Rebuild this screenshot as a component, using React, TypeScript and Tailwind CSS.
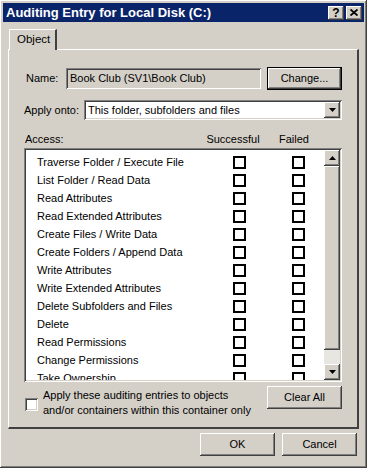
const raised =
  'shadow-[inset_-1px_-1px_#404040,inset_1px_1px_#ffffff,inset_-2px_-2px_#808080,inset_2px_2px_#d4d0c8]'
const sunken =
  'shadow-[inset_1px_1px_#808080,inset_-1px_-1px_#ffffff,inset_2px_2px_#404040,inset_-2px_-2px_#d4d0c8]'

const rights = [
  'Traverse Folder / Execute File',
  'List Folder / Read Data',
  'Read Attributes',
  'Read Extended Attributes',
  'Create Files / Write Data',
  'Create Folders / Append Data',
  'Write Attributes',
  'Write Extended Attributes',
  'Delete Subfolders and Files',
  'Delete',
  'Read Permissions',
  'Change Permissions',
  'Take Ownership',
]

const Button = ({ label, className = '' }: { label: string; className?: string }) => (
  <div className={`flex items-center justify-center bg-[#d4d0c8] text-[11px] text-black ${raised} ${className}`}>
    {label}
  </div>
)

const Arrow = ({ up }: { up?: boolean }) => (
  <svg width="7" height="4" viewBox="0 0 7 4">
    <path d={up ? 'M3.5 0L7 4H0z' : 'M0 0h7L3.5 4z'} fill="#000" />
  </svg>
)

const ListCheck = () => <div className="w-[13px] h-[13px] border-2 border-black bg-white" />

export default function App() {
  return (
    <div
      className={`w-[367px] h-[468px] bg-[#d4d0c8] p-[3px] flex flex-col font-['Liberation_Sans',Arial,sans-serif] text-black whitespace-nowrap ${raised}`}
    >
      {/* Title bar */}
      <div className="h-[19px] bg-[#0a246a] flex items-center pl-[3px] pr-[2px] shrink-0">
        <span className="text-white font-bold text-[13px] flex-1 leading-none">Auditing Entry for Local Disk (C:)</span>
        <div className={`w-[16px] h-[14px] bg-[#d4d0c8] flex items-center justify-center font-bold text-[12px] leading-none ${raised}`}>?</div>
        <div className={`w-[16px] h-[14px] ml-[2px] bg-[#d4d0c8] flex items-center justify-center ${raised}`}>
          <svg width="8" height="7" viewBox="0 0 8 7">
            <path d="M0.5 0.5L7.5 6.5M7.5 0.5L0.5 6.5" stroke="#000" strokeWidth="1.8" />
          </svg>
        </div>
      </div>

      {/* Tab strip */}
      <div className="flex pl-[6px] mt-[6px] h-[21px] items-end">
        <div className="h-[21px] w-[48px] pl-[7px] border-l border-t border-white border-r-2 border-r-[#404040] flex items-center text-[11.5px] relative z-10 bg-[#d4d0c8] -mb-px">
          Object
        </div>
      </div>

      {/* Tab panel */}
      <div className="ml-[5px] w-[351px] h-[380px] border-l border-t border-white border-r-2 border-b-2 border-r-[#404040] border-b-[#404040] px-[15px] pt-[17px] flex flex-col">
        {/* Name row */}
        <div className="flex items-center h-[23px]">
          <span className="text-[11px] w-[42px] pl-[2px]">Name:</span>
          <div className={`w-[195px] h-[21px] flex items-center pl-[4px] text-[11px] bg-[#d4d0c8] ${sunken}`}>
            Book Club (SV1\Book Club)
          </div>
          <div className="flex-1" />
          <div className="w-[75px] h-[23px] border border-black">
            <Button label="Change..." className="w-full h-full" />
          </div>
        </div>

        {/* Apply onto */}
        <div className="flex items-center mt-[10px] h-[20px]">
          <span className="text-[11px] w-[60px]">Apply onto:</span>
          <div className={`flex-1 h-[20px] bg-white flex items-center pl-[4px] pr-[2px] ${sunken}`}>
            <span className="flex-1 text-[11px]">This folder, subfolders and files</span>
            <div className={`w-[16px] h-[16px] flex items-center justify-center bg-[#d4d0c8] ${raised}`}>
              <Arrow />
            </div>
          </div>
        </div>

        {/* Access header */}
        <div className="flex items-end mt-[10px] h-[17px] text-[11px]">
          <span className="pl-[1px] flex-1">Access:</span>
          <span className="w-[60px] text-center mr-[3px]">Successful</span>
          <span className="w-[56px] text-center mr-[20px]">Failed</span>
        </div>

        {/* List */}
        <div className={`mt-[1px] h-[234px] bg-white flex p-[2px] ${sunken}`}>
          <div className="flex-1 overflow-hidden pt-[3px]">
            {rights.map((r) => (
              <div key={r} className="h-[18px] flex items-center text-[11px]">
                <span className="pl-[11px] flex-1">{r}</span>
                <div className="w-[13px] mr-[46px]">
                  <ListCheck />
                </div>
                <div className="w-[13px] mr-[19px]">
                  <ListCheck />
                </div>
              </div>
            ))}
          </div>
          <div className="w-[16px] flex flex-col">
            <div className={`h-[16px] bg-[#d4d0c8] flex items-center justify-center ${raised}`}>
              <Arrow up />
            </div>
            <div className={`h-[184px] bg-[#d4d0c8] ${raised}`} />
            <div className="flex-1 bg-[#e8e6e1]" />
            <div className={`h-[16px] bg-[#d4d0c8] flex items-center justify-center ${raised}`}>
              <Arrow />
            </div>
          </div>
        </div>

        {/* Bottom row */}
        <div className="flex items-start mt-[4px]">
          <div className={`w-[13px] h-[13px] bg-white mt-[12px] ml-[1px] ${sunken}`} />
          <div className="ml-[5px] text-[11px] leading-[15px] flex-1 pt-[2px]">
            Apply these auditing entries to objects
            <br />
            and/or containers within this container only
          </div>
          <Button label="Clear All" className="w-[75px] h-[23px]" />
        </div>
      </div>

      {/* Dialog buttons */}
      <div className="flex justify-end gap-[7px] mt-[4px] pr-[7px]">
        <Button label="OK" className="w-[75px] h-[23px]" />
        <Button label="Cancel" className="w-[75px] h-[23px]" />
      </div>
    </div>
  )
}
